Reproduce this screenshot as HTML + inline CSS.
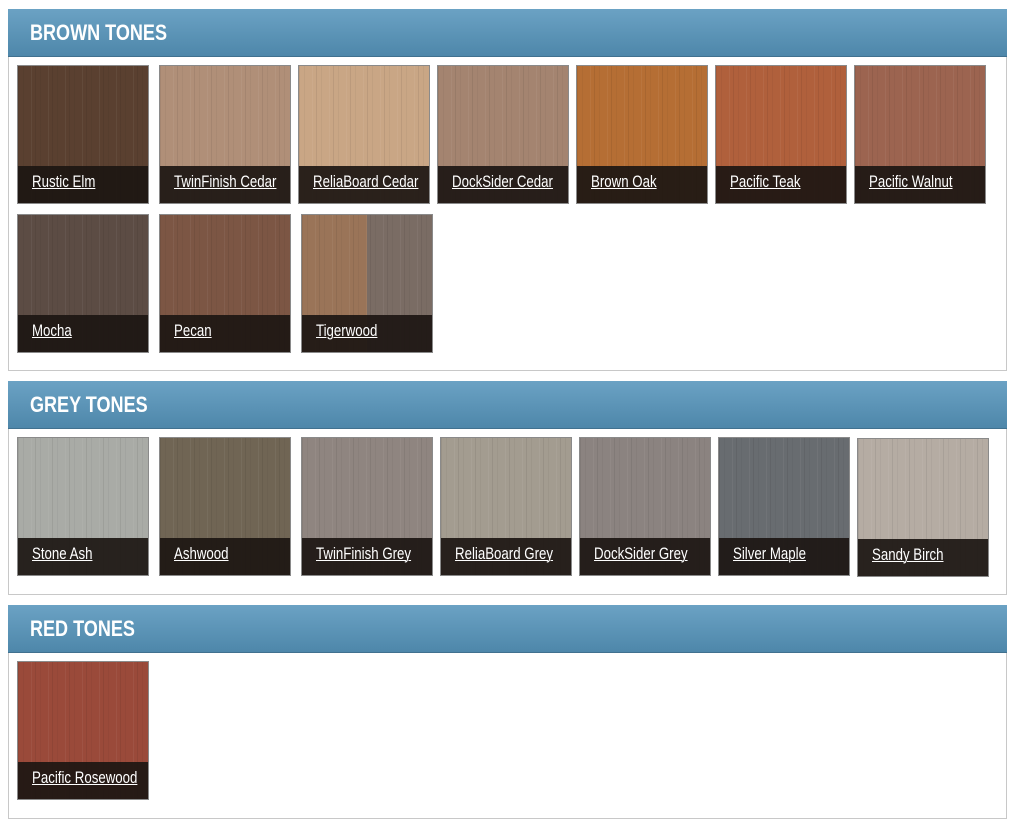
<!DOCTYPE html>
<html><head><meta charset="utf-8"><style>
body{margin:0;background:#fff;width:1015px;height:827px;position:relative;overflow:hidden;font-family:"Liberation Sans",sans-serif}
.hd{position:absolute;left:8px;width:999px;height:47px;background:linear-gradient(#6ba2c4,#4e87aa);border-bottom:1px solid #41718f}
.hd span{position:absolute;left:22px;top:11px;color:#fff;font-weight:bold;font-size:22px;transform:scaleX(.82);transform-origin:left}
.pn{position:absolute;left:8px;width:997px;border:1px solid #c8c8c8;border-top:none}
.t{position:absolute;width:130px;height:137px;border:1px solid #8a8a8a;overflow:hidden}
.t i{position:absolute;inset:0;background-image:repeating-linear-gradient(90deg,rgba(0,0,0,.07) 0 1px,transparent 1px 5px,rgba(0,0,0,.04) 5px 6px,transparent 6px 13px,rgba(255,255,255,.05) 13px 14px,transparent 14px 17px)}
.t b{position:absolute;left:0;right:0;bottom:0;height:37px;background:rgba(28,22,18,.92)}
.t u{position:absolute;left:14px;bottom:11px;color:#fff;font-size:17px;white-space:nowrap;transform:scaleX(.78);transform-origin:left;text-decoration-thickness:1px}
</style></head><body>
<div class="hd" style="top:9px"><span>BROWN TONES</span></div>
<div class="pn" style="top:57px;height:313px"></div>
<div class="hd" style="top:381px"><span>GREY TONES</span></div>
<div class="pn" style="top:429px;height:165px"></div>
<div class="hd" style="top:605px"><span>RED TONES</span></div>
<div class="pn" style="top:653px;height:165px"></div>

<div class="t" style="left:17px;top:65px;background:#5a4030"><i></i><b></b><u>Rustic Elm</u></div>
<div class="t" style="left:159px;top:65px;background:#b08f78"><i></i><b></b><u>TwinFinish Cedar</u></div>
<div class="t" style="left:298px;top:65px;background:#c9a685"><i></i><b></b><u>ReliaBoard Cedar</u></div>
<div class="t" style="left:437px;top:65px;background:#a48470"><i></i><b></b><u>DockSider Cedar</u></div>
<div class="t" style="left:576px;top:65px;background:#b56e34"><i></i><b></b><u>Brown Oak</u></div>
<div class="t" style="left:715px;top:65px;background:#b0603c"><i></i><b></b><u>Pacific Teak</u></div>
<div class="t" style="left:854px;top:65px;background:#9c6450"><i></i><b></b><u>Pacific Walnut</u></div>
<div class="t" style="left:17px;top:214px;background:#5c4c44"><i></i><b></b><u>Mocha</u></div>
<div class="t" style="left:159px;top:214px;background:#7c5644"><i></i><b></b><u>Pecan</u></div>
<div class="t" style="left:301px;top:214px;background:linear-gradient(90deg,#9a7458 0 50%,#7a6c64 50%)"><i></i><b></b><u>Tigerwood</u></div>

<div class="t" style="left:17px;top:437px;background:#a9aba6"><i></i><b></b><u>Stone Ash</u></div>
<div class="t" style="left:159px;top:437px;background:#706554"><i></i><b></b><u>Ashwood</u></div>
<div class="t" style="left:301px;top:437px;background:#8f8580"><i></i><b></b><u>TwinFinish Grey</u></div>
<div class="t" style="left:440px;top:437px;background:#a39c90"><i></i><b></b><u>ReliaBoard Grey</u></div>
<div class="t" style="left:579px;top:437px;background:#8b8380"><i></i><b></b><u>DockSider Grey</u></div>
<div class="t" style="left:718px;top:437px;background:#686c70"><i></i><b></b><u>Silver Maple</u></div>
<div class="t" style="left:857px;top:438px;background:#b5aca3"><i></i><b></b><u>Sandy Birch</u></div>

<div class="t" style="left:17px;top:661px;background:#9a4a3a"><i></i><b></b><u>Pacific Rosewood</u></div>
</body></html>
